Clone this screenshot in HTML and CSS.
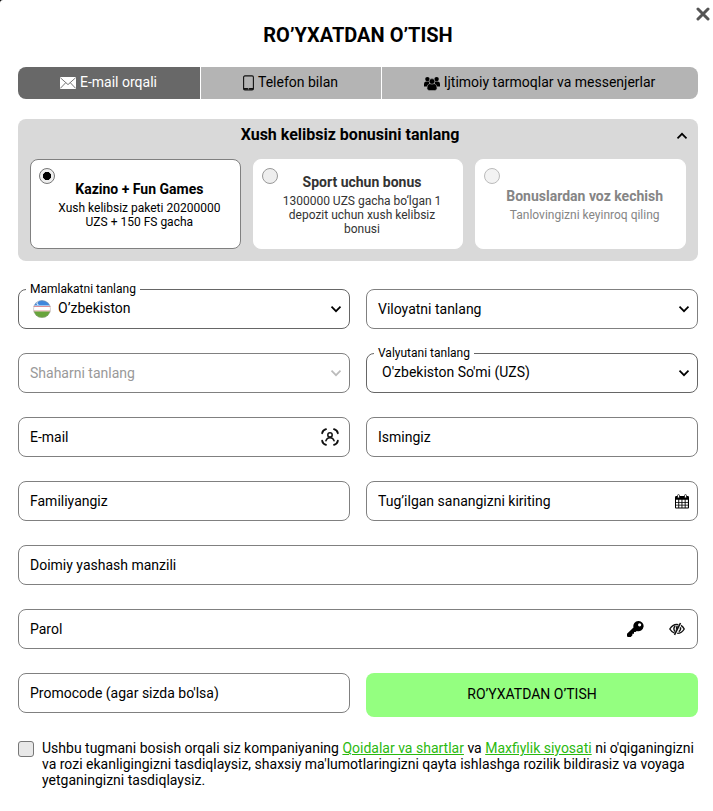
FILE: index.html
```
<!DOCTYPE html>
<html lang="uz">
<head>
    <meta charset="utf-8">
    <title>Ro’yxatdan o’tish</title>
    <link rel="stylesheet" href="styles.css">
</head>
<body>
    <div class="modal">
        <button type="button" class="close">
            <svg width="14" height="14" viewBox="0 0 14 14"><path d="M2 2L12 12M12 2L2 12" fill="none" stroke="#555" stroke-width="3" stroke-linecap="round"/></svg>
        </button>
        <h1>RO’YXATDAN O’TISH</h1>

        <div class="tabs">
            <div class="tab active">
                <svg class="mail" width="16" height="12" viewBox="0 0 16 12"><path d="M0 0H16V12H0Z" fill="#fff"/><path d="M0.3 0.7L8 7.6L15.7 0.7M0.3 11.4L5.6 5.8M15.7 11.4L10.4 5.8" fill="none" stroke="#686868" stroke-width="0.9"/></svg>
                <span>E-mail orqali</span>
            </div>
            <div class="tab">
                <svg class="phone" width="11" height="16" viewBox="0 0 11 16"><rect x="0.6" y="0.9" width="9.8" height="14" rx="1.3" fill="none" stroke="#111" stroke-width="1.1"/><path d="M0.6 13.8H10.4" stroke="#111" stroke-width="1.6"/><path d="M4.9 13.8H6.1" stroke="#b4b4b4" stroke-width="0.9"/></svg>
                <span>Telefon bilan</span>
            </div>
            <div class="tab">
                <svg class="people" width="16" height="15" viewBox="0 0 16 15"><circle cx="3.4" cy="3.1" r="2.2"/><circle cx="12.6" cy="3.1" r="2.2"/><path d="M0 10.5V8Q0 5.6 2 5.5H5V10.5ZM16 10.5V8Q16 5.6 14 5.5H11V10.5Z"/><g stroke="#b4b4b4" stroke-width="0.5"><path d="M3 12.2Q3 8 5.6 7.7H10.4Q13 8 13 12.2Q12.8 14.4 10.8 14.5H5.2Q3.2 14.4 3 12.2Z"/><circle cx="8" cy="5.4" r="2.8"/></g></svg>
                <span>Ijtimoiy tarmoqlar va messenjerlar</span>
            </div>
        </div>

        <div class="bonus">
            <div class="bonus-head">
                <h2>Xush kelibsiz bonusini tanlang</h2>
                <svg class="bonus-arrow" width="12" height="8" viewBox="0 0 12 8"><path d="M1.5 6.3L6 1.8L10.5 6.3" fill="none" stroke="#000" stroke-width="1.7"/></svg>
            </div>
            <div class="bonus-list">
                <div class="card selected">
                    <span class="radio"></span>
                    <h3>Kazino + Fun Games</h3>
                    <p>Xush kelibsiz paketi 20200000 UZS + 150 FS gacha</p>
                </div>
                <div class="card sport">
                    <span class="radio"></span>
                    <h3>Sport uchun bonus</h3>
                    <p>1300000 UZS gacha bo‘lgan 1 depozit uchun xush kelibsiz bonusi</p>
                </div>
                <div class="card refuse">
                    <span class="radio"></span>
                    <h3>Bonuslardan voz kechish</h3>
                    <p>Tanlovingizni keyinroq qiling</p>
                </div>
            </div>
        </div>

        <form class="form">
            <div class="field filled">
                <label>Mamlakatni tanlang</label>
                <svg class="flag" width="18" height="18" viewBox="0 0 18 18"><defs><clipPath id="round"><circle cx="9" cy="9" r="8.7"/></clipPath></defs><g clip-path="url(#round)"><path d="M0 0H18V18H0Z" fill="#fff"/><path d="M0 0H18V5.6H0Z" fill="#3f87dc"/><path d="M0 6.1H18V7H0ZM0 10.6H18V11.4H0Z" fill="#dc8f96"/><path d="M0 11.4H18V18H0Z" fill="#67a43b"/><path d="M6 1.5a1.8 1.8 0 1 0 0 3.2a1.6 1.6 0 1 1 0-3.2Z" fill="#fff"/></g><circle cx="9" cy="9" r="8.5" fill="none" stroke="#999" stroke-opacity="0.55" stroke-width="0.8"/></svg>
                <span class="value">O’zbekiston</span>
                <svg class="arrow" width="12" height="8" viewBox="0 0 12 8"><path d="M1.5 1.7L6 6.2L10.5 1.7"/></svg>
            </div>
            <div class="field">
                <span class="value">Viloyatni tanlang</span>
                <svg class="arrow" width="12" height="8" viewBox="0 0 12 8"><path d="M1.5 1.7L6 6.2L10.5 1.7"/></svg>
            </div>
            <div class="field disabled">
                <span class="value">Shaharni tanlang</span>
                <svg class="arrow" width="12" height="8" viewBox="0 0 12 8"><path d="M1.5 1.7L6 6.2L10.5 1.7"/></svg>
            </div>
            <div class="field filled currency">
                <label>Valyutani tanlang</label>
                <span class="value">O'zbekiston So'mi (UZS)</span>
                <svg class="arrow" width="12" height="8" viewBox="0 0 12 8"><path d="M1.5 1.7L6 6.2L10.5 1.7"/></svg>
            </div>
            <div class="field">
                <input type="text" name="email" placeholder="E-mail">
                <svg class="scan" width="18" height="18" viewBox="0 0 18 18" fill="none" stroke="#111" stroke-linecap="round"><path d="M1.2 5.2Q1.7 2.2 5 1.2M13 1.2Q16.3 2.2 16.8 5.2M1.2 12.8Q1.7 15.8 5 16.8M13 16.8Q16.3 15.8 16.8 12.8" stroke-width="1.9"/><circle cx="9" cy="6.9" r="2.2" stroke-width="1.5"/><path d="M4.9 12.7Q6 9.8 9 9.8T13.1 12.7" stroke-width="1.5"/></svg>
            </div>
            <div class="field">
                <input type="text" name="name" placeholder="Ismingiz">
            </div>
            <div class="field">
                <input type="text" name="surname" placeholder="Familiyangiz">
            </div>
            <div class="field">
                <input type="text" name="birthday" placeholder="Tug’ilgan sanangizni kiriting">
                <svg class="calendar" width="14" height="15" viewBox="0 0 14 15"><path d="M1.2 2H12.8Q14 2 14 3.2V13.5Q14 14.5 13 14.5H1Q0 14.5 0 13.5V3.2Q0 2 1.2 2Z"/><path d="M1 5.8h2.3v2.1H1zM4.2 5.8h2.3v2.1H4.2zM7.4 5.8h2.3v2.1H7.4zM10.6 5.8h2.3v2.1h-2.3zM1 8.7h2.3v2.1H1zM4.2 8.7h2.3v2.1H4.2zM7.4 8.7h2.3v2.1H7.4zM10.6 8.7h2.3v2.1h-2.3zM1 11.6h2.3v1.9H1zM4.2 11.6h2.3v1.9H4.2zM7.4 11.6h2.3v1.9H7.4zM10.6 11.6h2.3v1.9h-2.3z" fill="#fff"/><rect x="2.5" y="0.6" width="2" height="3.4" rx="1" fill="#fff" stroke="#000" stroke-width="0.7"/><rect x="9.5" y="0.6" width="2" height="3.4" rx="1" fill="#fff" stroke="#000" stroke-width="0.7"/></svg>
            </div>
            <div class="field wide">
                <input type="text" name="address" placeholder="Doimiy yashash manzili">
            </div>
            <div class="field wide">
                <input type="password" name="psw" placeholder="Parol">
                <svg class="key" width="17" height="16" viewBox="0 0 17 16"><path d="M11.3 0a5.1 5.1 0 1 1-1.5 9.9L8.5 11.1H7V12.7H5.4V14.3L3.8 15.9H0.8L0 15.2V12.8L6.5 6.5A5.2 5.2 0 0 1 11.3 0Z"/><circle cx="12.6" cy="3.8" r="1.6" fill="#fff"/></svg>
                <svg class="eye" width="16" height="14" viewBox="0 0 16 14" fill="none" stroke="#111"><path d="M9.4 2.7Q4.2 1.6 0.8 7Q2.7 10.2 5.6 11.1M12 3.4Q14.2 4.9 15.2 7Q12.9 11.2 8.2 11.4" stroke-width="1.4"/><path d="M6.2 4Q3.6 6.7 6.1 9.6M11.4 5.3Q12.3 7.8 9.8 9.7" stroke-width="1.4"/><path d="M11.5 1L5.5 12.8" stroke-width="1.6"/><path d="M7 4.2H9.5L6.8 9Z" fill="#111" stroke="none"/></svg>
            </div>
            <div class="field">
                <input type="text" name="promocode" placeholder="Promocode (agar sizda bo'lsa)">
            </div>
            <button type="button" class="submit">RO’YXATDAN O’TISH</button>
        </form>

        <div class="agree">
            <span class="checkbox"></span>
            <p>Ushbu tugmani bosish orqali siz kompaniyaning <a href="#">Qoidalar va shartlar</a> va <a href="#">Maxfiylik siyosati</a> ni o'qiganingizni va rozi ekanligingizni tasdiqlaysiz, shaxsiy ma'lumotlaringizni qayta ishlashga rozilik bildirasiz va voyaga yetganingizni tasdiqlaysiz.</p>
        </div>
    </div>
</body>
</html>
```
FILE: styles.css
```
* {
    box-sizing: border-box;
}
html {
    background: #000;
}
body {
    margin: 0;
    font-family: Roboto, "Liberation Sans", sans-serif;
    font-size: 14px;
    color: #000;
}
h1, h2, h3, p {
    margin: 0;
}
svg {
    display: block;
    flex: none;
}
.modal {
    position: relative;
    height: 811px;
    padding: 23px 15px 0 18px;
    background: #fff;
    border-top-left-radius: 3px;
}
.close {
    position: absolute;
    top: 7px;
    right: 3px;
    padding: 0;
    border: 0;
    background: none;
}
h1 {
    width: 680px;
    line-height: 24px;
    font-size: 20px;
    font-weight: 700;
    text-align: center;
}

/* tabs */
.tabs {
    display: grid;
    grid-template-columns: 182px 180px 1fr;
    gap: 1px;
    width: 680px;
    height: 32px;
    margin-top: 20px;
    border-radius: 8px;
    overflow: hidden;
}
.tab {
    display: flex;
    align-items: center;
    justify-content: center;
    gap: 4px;
    padding: 0 1px 2px 0;
    background: #b4b4b4;
}
.tab.active {
    background: #686868;
    color: #fff;
}
.tab svg {
    margin-top: 2px;
}

/* bonus */
.bonus {
    width: 680px;
    height: 142px;
    margin-top: 20px;
    padding: 0 12px;
    background: #d9d9d9;
    border-radius: 8px;
}
.bonus-head {
    position: relative;
    height: 40px;
    padding-top: 6px;
}
.bonus-head h2 {
    line-height: 20px;
    font-size: 16px;
    font-weight: 700;
    text-align: center;
    padding-right: 16px;
}
.bonus-arrow {
    position: absolute;
    top: 13px;
    right: -2px;
}
.bonus-list {
    display: grid;
    grid-template-columns: repeat(3, 1fr);
    gap: 12px;
}
.card {
    position: relative;
    display: flex;
    flex-direction: column;
    justify-content: center;
    height: 90px;
    padding: 0 16px 0 24px;
    background: #fff;
    border: 1px solid #fff;
    border-radius: 8px;
    text-align: center;
}
.card h3 {
    line-height: 20px;
    font-size: 14px;
    font-weight: 700;
    white-space: nowrap;
}
.card p {
    margin-top: 2px;
    line-height: 14px;
    font-size: 12px;
}
.card.selected {
    border-color: #808080;
}
.card.sport {
    color: #333;
}
.card.refuse {
    color: #858585;
}
.radio {
    position: absolute;
    top: 8px;
    left: 8px;
    width: 16px;
    height: 16px;
    background: #eee;
    border: 1px solid #999;
    border-radius: 50%;
}
.selected .radio {
    border-color: #777;
    background: radial-gradient(circle, #000 3.8px, #eee 4.4px);
}
.refuse .radio {
    border-color: #bbb;
    background: #f3f3f3;
}

/* form */
.form {
    display: grid;
    grid-template-columns: 332px 332px;
    column-gap: 16px;
    row-gap: 24px;
    margin-top: 28px;
}
.field {
    position: relative;
    display: flex;
    align-items: center;
    height: 40px;
    padding: 0 7px 0 11px;
    border: 1px solid #808080;
    border-radius: 8px;
}
.field.wide {
    grid-column: span 2;
}
.field label {
    position: absolute;
    top: -9px;
    left: 7px;
    padding: 0 4px;
    line-height: 16px;
    font-size: 12px;
    background: #fff;
}
.field.filled {
    border-color: #666;
}
.filled .value {
    padding-bottom: 2px;
}
.currency .value {
    padding-left: 4px;
}
.value {
    flex: 1;
}
.flag {
    margin: 0 7px 0 3px;
}
.field input {
    flex: 1;
    min-width: 0;
    padding: 0;
    border: 0;
    outline: 0;
    background: none;
    font: inherit;
}
.field input::placeholder {
    color: #000;
    opacity: 1;
}
.arrow path {
    fill: none;
    stroke: #000;
    stroke-width: 1.7;
}
.disabled .value {
    color: #999;
}
.disabled .arrow path {
    stroke: #bbb;
}
.scan {
    margin-right: 3px;
}
.calendar {
    margin-right: 1px;
}
.eye {
    margin: 0 5px 0 25px;
}
.submit {
    height: 44px;
    padding: 0 0 2px;
    border: 0;
    border-radius: 8px;
    background: #94ff80;
    font: inherit;
    color: #000;
}

/* agreement */
.agree {
    display: flex;
    gap: 8px;
    margin-top: 23px;
}
.agree p {
    width: 662px;
    line-height: 16px;
}
.agree a {
    color: #2bb90f;
}
.checkbox {
    flex: none;
    width: 16px;
    height: 16px;
    margin-top: 1px;
    background: #e8e8e8;
    border: 1px solid #777;
    border-radius: 3px;
}
```
